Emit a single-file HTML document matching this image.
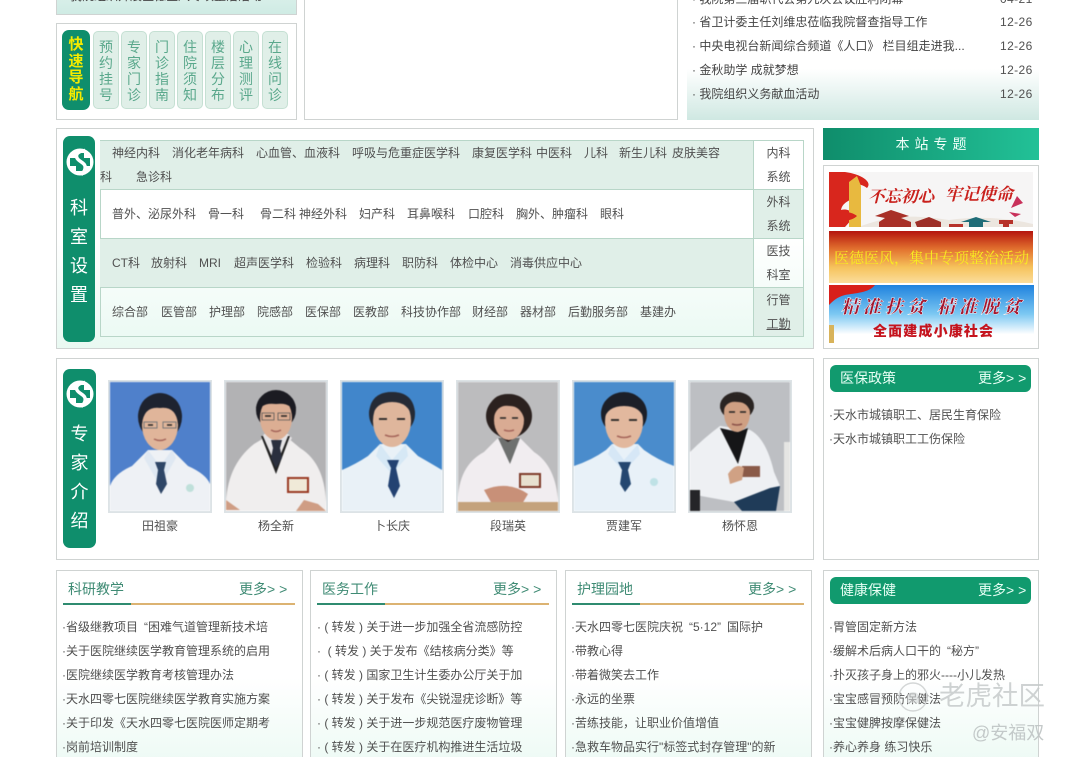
<!DOCTYPE html>
<html lang="zh-CN">
<head>
<meta charset="utf-8">
<title>医院首页</title>
<style>
*{box-sizing:border-box;margin:0;padding:0}
html,body{width:1066px;height:757px;overflow:hidden;background:#fff}
body{position:relative;font-family:"Liberation Sans","Noto Sans CJK SC",sans-serif;font-size:12px;color:#555}
.a{position:absolute;white-space:nowrap}
.t{position:absolute;white-space:nowrap;line-height:24px;height:24px;font-size:12px;color:#505050}
.box{position:absolute;border:1px solid #cfd3d2;background:#fff}
.mint{background:linear-gradient(#fff 50%,#e9f9f2 100%)}
.qn{position:absolute;top:31px;height:78px;width:26px;background:#e0efe8;border:1px solid #c5e0d3;border-radius:5px;color:#5aa88c;font-size:14px;line-height:16px;text-align:center;padding-top:7px;white-space:normal}
.pill{position:absolute;background:#0f8e6c;border-radius:7px;color:#fff;text-align:center}
.row{position:absolute;left:100px;width:654px;border-bottom:1px solid #b8d6c8}
.sys{position:absolute;left:753px;width:50px;height:49px;border-left:1px solid #b8d6c8;border-bottom:1px solid #b8d6c8;text-align:center;line-height:24px;font-size:12px;color:#505050}
.ph{position:absolute;top:380px;width:104px;height:133px;border:2px solid #dde3e6}
.ph svg{display:block;width:100px;height:129px;filter:blur(.5px)}
.nm{position:absolute;top:514px;width:104px;text-align:center;line-height:24px;font-size:12px;color:#505050}
.g{background:#e0efe8}
.tit{position:absolute;top:577px;font-size:14px;line-height:24px;color:#3f8b74;white-space:nowrap}
.more{position:absolute;top:577px;font-size:14px;line-height:24px;color:#3f8b74;white-space:nowrap}
.bar{position:absolute;top:603px;height:2px;width:232px;background:linear-gradient(90deg,#2f8b70 0,#2f8b70 68px,#dcb372 68px,#dcb372 100%)}
.hd{position:absolute;width:201px;height:27px;background:#119a6e;border-radius:6px;color:#e8fff5;font-size:14px;line-height:27px}
.hd b{font-weight:400;position:absolute;left:10px}
.hd i{font-style:normal;position:absolute;left:148px;white-space:nowrap}
.q{margin-left:6px}
</style>
</head>
<body>

<!-- top row -->
<div class="box" style="left:56px;top:-20px;width:241px;height:35px;background:linear-gradient(#e2f4ef,#cfebe4)"></div>
<div class="t" style="left:70px;top:-16px;color:#444">我院组织开展医德医风专项整治活动</div>

<div class="box" style="left:56px;top:23px;width:241px;height:97px"></div>
<div class="pill" style="left:62px;top:30px;width:28px;height:80px;color:#f5ea00;font-size:15px;font-weight:700;line-height:16.5px;padding-top:7px;white-space:normal">快速导航</div>
<div class="qn" style="left:93px">预约挂号</div>
<div class="qn" style="left:121px">专家门诊</div>
<div class="qn" style="left:149px">门诊指南</div>
<div class="qn" style="left:177px">住院须知</div>
<div class="qn" style="left:205px">楼层分布</div>
<div class="qn" style="left:233px">心理测评</div>
<div class="qn" style="left:262px">在线问诊</div>

<div class="box" style="left:304px;top:-20px;width:374px;height:140px"></div>

<div class="a" style="left:687px;top:60px;width:352px;height:60px;background:linear-gradient(#fff 0,#fff 15%,#cfe8e2 100%)"></div>
<div class="t" style="left:692px;top:-13px;color:#444">· 我院第三届职代会第九次会议胜利闭幕</div>
<div class="t" style="left:1000px;top:-13px;letter-spacing:.4px">04-21</div>
<div class="t" style="left:692px;top:10px;color:#444">· 省卫计委主任刘维忠莅临我院督查指导工作</div>
<div class="t" style="left:1000px;top:10px;letter-spacing:.4px">12-26</div>
<div class="t" style="left:692px;top:34px;color:#444">· 中央电视台新闻综合频道《人口》 栏目组走进我...</div>
<div class="t" style="left:1000px;top:34px;letter-spacing:.4px">12-26</div>
<div class="t" style="left:692px;top:58px;color:#444">· 金秋助学 成就梦想</div>
<div class="t" style="left:1000px;top:58px;letter-spacing:.4px">12-26</div>
<div class="t" style="left:692px;top:82px;color:#444">· 我院组织义务献血活动</div>
<div class="t" style="left:1000px;top:82px;letter-spacing:.4px">12-26</div>

<!-- 科室设置 -->
<div class="box mint" style="left:56px;top:128px;width:758px;height:221px"></div>
<div class="pill" style="left:63px;top:136px;width:32px;height:206px"></div>
<svg class="a" style="left:66px;top:148px" width="28" height="28" viewBox="0 0 28 28"><circle cx="14" cy="14" r="13.5" fill="#fff"/><path d="M10 5H18V10H24V18H18V23H10V18H4V10H10Z" fill="#0f8e6c"/><path d="M19 2.500C13 3 9 6 11 10C13 14 18 14 19 18C20 22 17 25 15 26.500" fill="none" stroke="#fff" stroke-width="3.500"/><path d="M12 3.500C9.500 6 9 9 11 11.500" fill="none" stroke="#fff" stroke-width="1.500"/></svg>
<div class="a" style="left:63px;top:194px;width:32px;text-align:center;color:#fff;font-size:18px;line-height:29px;white-space:normal">科室设置</div>

<div class="a" style="left:100px;top:140px;width:704px;height:197px;border:1px solid #b8d6c8"></div>
<div class="row g" style="top:141px;height:49px"></div>
<div class="row" style="top:190px;height:49px"></div>
<div class="row g" style="top:239px;height:49px"></div>
<div class="row" style="top:288px;height:48px;border-bottom:0"></div>
<div class="sys" style="top:141px">内科<br>系统</div>
<div class="sys g" style="top:190px">外科<br>系统</div>
<div class="sys" style="top:239px">医技<br>科室</div>
<div class="sys g" style="top:288px;height:48px;border-bottom:0">行管<br><span style="text-decoration:underline">工勤</span></div>

<div class="t" style="top:141px;left:112px">神经内科</div>
<div class="t" style="top:141px;left:172px">消化老年病科</div>
<div class="t" style="top:141px;left:256px">心血管、血液科</div>
<div class="t" style="top:141px;left:352px">呼吸与危重症医学科</div>
<div class="t" style="top:141px;left:472px">康复医学科</div>
<div class="t" style="top:141px;left:536px">中医科</div>
<div class="t" style="top:141px;left:584px">儿科</div>
<div class="t" style="top:141px;left:619px">新生儿科</div>
<div class="t" style="top:141px;left:672px">皮肤美容</div>
<div class="t" style="top:165px;left:100px">科</div>
<div class="t" style="top:165px;left:136px">急诊科</div>

<div class="t" style="top:202px;left:112px">普外、泌尿外科</div>
<div class="t" style="top:202px;left:208px">骨一科</div>
<div class="t" style="top:202px;left:260px">骨二科</div>
<div class="t" style="top:202px;left:299px">神经外科</div>
<div class="t" style="top:202px;left:359px">妇产科</div>
<div class="t" style="top:202px;left:407px">耳鼻喉科</div>
<div class="t" style="top:202px;left:468px">口腔科</div>
<div class="t" style="top:202px;left:516px">胸外、肿瘤科</div>
<div class="t" style="top:202px;left:600px">眼科</div>

<div class="t" style="top:251px;left:112px">CT科</div>
<div class="t" style="top:251px;left:151px">放射科</div>
<div class="t" style="top:251px;left:199px">MRI</div>
<div class="t" style="top:251px;left:234px">超声医学科</div>
<div class="t" style="top:251px;left:306px">检验科</div>
<div class="t" style="top:251px;left:354px">病理科</div>
<div class="t" style="top:251px;left:402px">职防科</div>
<div class="t" style="top:251px;left:450px">体检中心</div>
<div class="t" style="top:251px;left:510px">消毒供应中心</div>

<div class="t" style="top:300px;left:112px">综合部</div>
<div class="t" style="top:300px;left:161px">医管部</div>
<div class="t" style="top:300px;left:209px">护理部</div>
<div class="t" style="top:300px;left:257px">院感部</div>
<div class="t" style="top:300px;left:305px">医保部</div>
<div class="t" style="top:300px;left:353px">医教部</div>
<div class="t" style="top:300px;left:401px">科技协作部</div>
<div class="t" style="top:300px;left:472px">财经部</div>
<div class="t" style="top:300px;left:520px">器材部</div>
<div class="t" style="top:300px;left:568px">后勤服务部</div>
<div class="t" style="top:300px;left:640px">基建办</div>

<!-- 本站专题 -->
<div class="a" style="left:823px;top:128px;width:216px;height:32px;padding-left:5px;background:linear-gradient(90deg,#0f8d6b,#22c197);color:#f0fff9;font-size:14px;line-height:32px;text-align:center;letter-spacing:5px">本站专题</div>
<div class="box" style="left:823px;top:165px;width:216px;height:184px"></div>

<svg class="a" style="left:829px;top:172px" width="204" height="55" viewBox="0 0 204 55">
<rect width="204" height="55" fill="#f6f5f5"/>
<path d="M0 0H16C32 2 44 10 38 16C30 10 24 12 24 22C24 30 14 28 12 38C18 36 26 40 24 46L16 55H0Z" fill="#d8261d"/>
<path d="M20 10L28 4L32 14V55H20Z" fill="#e8b93f"/>
<path d="M0 48C8 38 20 38 28 44C22 50 12 48 2 55H0Z" fill="#d8261d"/>
<path d="M32 54C60 44 80 42 120 48C150 44 180 46 204 52V55H32Z" fill="#ece6df"/>
<path d="M46 44L62 38L80 44L72 46L82 50V55H50V50L56 46Z" fill="#a83028"/>
<path d="M86 50L100 45L112 50V55H88Z" fill="#9d2f28"/>
<path d="M132 50L147 45L162 50H154V55H140V50Z" fill="#1f6d78"/>
<path d="M120 52H134V55H120ZM170 48H184V52H180V55H174V52H170Z" fill="#b7322a"/>
<text x="39" y="30" font-family="Noto Serif CJK SC,Liberation Serif,serif" font-size="16.500" font-weight="700" fill="#c9201c" font-style="italic">不忘初心</text>
<text x="116" y="28" font-family="Noto Serif CJK SC,Liberation Serif,serif" font-size="17" font-weight="700" fill="#c9201c" font-style="italic">牢记使命</text>
<path d="M188 24L182 36L194 31ZM180 40L192 42L186 45Z" fill="#c8305a"/>
</svg>
<svg class="a" style="left:829px;top:231px" width="204" height="52" viewBox="0 0 204 52">
<defs><linearGradient id="b2" x1="0" x2="0" y1="0" y2="1"><stop offset="0" stop-color="#b5140e"/><stop offset=".35" stop-color="#e2722f"/><stop offset=".7" stop-color="#f6c35c"/><stop offset="1" stop-color="#fbdd9c"/></linearGradient></defs>
<rect width="204" height="52" fill="url(#b2)"/>
<text x="5" y="32" font-family="Noto Serif CJK SC,Liberation Serif,serif" font-size="15" fill="#f8ee20">医德医风，集中专项整治活动</text>
</svg>
<svg class="a" style="left:829px;top:285px" width="205" height="58" viewBox="0 0 205 58">
<defs><linearGradient id="b3" x1="0" x2="0" y1="0" y2="1"><stop offset="0" stop-color="#1f82de"/><stop offset=".5" stop-color="#7cc8f2"/><stop offset=".85" stop-color="#fff"/><stop offset="1" stop-color="#fff"/></linearGradient></defs>
<rect width="205" height="58" fill="url(#b3)"/>
<path d="M0 0H46C40 8 26 8 16 10C8 12 4 16 0 20Z" fill="#d81f1a"/>
<rect x="0" y="40" width="5" height="18" fill="#d8b35a"/>
<text x="12" y="28" font-family="Noto Serif CJK SC,Liberation Serif,serif" font-size="18" font-weight="900" fill="#a3172f" stroke="#fff" stroke-width=".4" font-style="italic" textLength="84">精准扶贫</text>
<text x="108" y="28" font-family="Noto Serif CJK SC,Liberation Serif,serif" font-size="18" font-weight="900" fill="#a3172f" stroke="#fff" stroke-width=".4" font-style="italic" textLength="84">精准脱贫</text>
<text x="44" y="51" font-family="Liberation Sans,Noto Sans CJK SC,sans-serif" font-size="14" font-weight="900" fill="#c5141e" textLength="120">全面建成小康社会</text>
</svg>

<!-- 专家介绍 -->
<div class="box" style="left:56px;top:358px;width:758px;height:202px"></div>
<div class="pill" style="left:63px;top:369px;width:33px;height:179px"></div>
<svg class="a" style="left:66px;top:380px" width="28" height="28" viewBox="0 0 28 28"><circle cx="14" cy="14" r="13.5" fill="#fff"/><path d="M10 5H18V10H24V18H18V23H10V18H4V10H10Z" fill="#0f8e6c"/><path d="M19 2.500C13 3 9 6 11 10C13 14 18 14 19 18C20 22 17 25 15 26.500" fill="none" stroke="#fff" stroke-width="3.500"/><path d="M12 3.500C9.500 6 9 9 11 11.500" fill="none" stroke="#fff" stroke-width="1.500"/></svg>
<div class="a" style="left:63px;top:420px;width:33px;text-align:center;color:#fff;font-size:18px;line-height:29px;white-space:normal">专家介绍</div>

<div class="ph" style="left:108px"><svg viewBox="0 0 100 129"><rect width="100" height="129" fill="#4f80cb"/><path d="M0 104Q4 92 22 84L38 68H62L78 84Q96 92 100 102V129H0Z" fill="#eef1f5"/><path d="M38 68L50 84L62 68L66 76L50 104L34 76Z" fill="#dfe8f2"/><path d="M45 80H56L54 88L57 102L51 112L46 102L48 88Z" fill="#2e4667"/><ellipse cx="50" cy="35" rx="22" ry="24" fill="#1e2330"/><ellipse cx="50" cy="43" rx="18" ry="25" fill="#e0b59a"/><path d="M32 42Q34 24 50 26Q66 24 68 42L72 34Q70 12 50 12Q30 12 28 34Z" fill="#1e2330"/><path d="M34 40H47V46H34ZM53 40H66V46H53Z" fill="none" stroke="#777" stroke-width="1"/><path d="M38 43H43M57 43H62" stroke="#222" stroke-width="1.500"/><path d="M44 57Q50 60 56 57" stroke="#a5655a" stroke-width="1.500" fill="none"/><circle cx="80" cy="106" r="4" fill="#bfe0da"/></svg></div>
<div class="nm" style="left:108px">田祖豪</div>

<div class="ph" style="left:224px"><svg viewBox="0 0 100 129"><rect width="100" height="129" fill="#b2b2b4"/><path d="M0 125Q0 84 28 62L38 56H62L74 66Q100 82 100 125V129H0Z" fill="#f0eeee"/><path d="M36 56L50 84L66 56L62 52H38Z" fill="#e6e4e6"/><path d="M35 54L50 92L64 54L62 54L50 84L37 54Z" fill="#222"/><path d="M45 58H56L54 66L56 76L50 86L45 76L47 66Z" fill="#2a2f3e"/><rect x="62" y="96" width="20" height="14" fill="#f0ead8" stroke="#9a3a24" stroke-width="2"/><ellipse cx="50" cy="28" rx="20" ry="20" fill="#1b1b22"/><ellipse cx="50" cy="36" rx="16" ry="22" fill="#dcae93"/><path d="M32 32Q34 20 50 22Q66 20 68 32L70 26Q68 10 50 10Q32 10 30 26Z" fill="#1b1b22"/><path d="M36 31H48V38H36ZM52 31H64V38H52Z" fill="none" stroke="#555" stroke-width=".8"/><path d="M39 34H45M55 34H61" stroke="#222" stroke-width="1.500"/><path d="M45 48Q50 51 55 48" stroke="#a5655a" stroke-width="1.500" fill="none"/><path d="M0 118L14 128H0ZM78 118L92 122L100 129H70Z" fill="#cf9d84"/></svg></div>
<div class="nm" style="left:224px">杨全新</div>

<div class="ph" style="left:340px"><svg viewBox="0 0 100 129"><rect width="100" height="129" fill="#4186cb"/><path d="M0 88Q14 82 26 74L38 62H64L76 74Q90 82 100 88V129H0Z" fill="#e9f1f7"/><path d="M38 62L50 78L64 62L66 74L50 92L34 74Z" fill="#d6e8f5"/><path d="M45 78H57L54 86L58 104L52 116L46 104L49 86Z" fill="#234272"/><ellipse cx="50" cy="32" rx="23" ry="22" fill="#252a35"/><ellipse cx="50" cy="39" rx="19" ry="26" fill="#dfb69c"/><path d="M30 36Q33 20 50 20Q67 20 70 36L73 32Q72 10 50 10Q28 10 27 32Z" fill="#252a35"/><path d="M37 37H45M55 37H63" stroke="#222" stroke-width="1.800"/><path d="M43 53Q50 56 57 53" stroke="#a5655a" stroke-width="1.500" fill="none"/></svg></div>
<div class="nm" style="left:340px">卜长庆</div>

<div class="ph" style="left:456px"><svg viewBox="0 0 100 129"><rect width="100" height="129" fill="#bcbcbe"/><path d="M0 120Q0 84 26 70L40 56H62L76 70Q98 84 100 120H0Z" fill="#f1edf0"/><path d="M40 56H62L52 82Z" fill="#6e706f"/><path d="M38 52L50 60L64 52L62 48H40Z" fill="#2a1d1c"/><ellipse cx="51" cy="34" rx="23" ry="22" fill="#2b211f"/><ellipse cx="51" cy="38" rx="15" ry="20" fill="#d9ab93"/><path d="M36 34Q40 22 52 24Q62 24 66 36L72 28Q66 12 50 12Q34 12 30 28Z" fill="#2b211f"/><path d="M42 36H48M54 36H60" stroke="#222" stroke-width="1.500"/><path d="M46 48Q51 50 56 48" stroke="#a5655a" stroke-width="1.500" fill="none"/><rect x="62" y="92" width="20" height="13" fill="#e7e0cf" stroke="#7e3a2a" stroke-width="2"/><path d="M26 108Q50 98 70 112L64 122H34Z" fill="#c89078"/><rect y="120" width="100" height="9" fill="#c4a27c"/></svg></div>
<div class="nm" style="left:456px">段瑞英</div>

<div class="ph" style="left:572px"><svg viewBox="0 0 100 129"><rect width="100" height="129" fill="#4a8ccc"/><path d="M0 84Q18 78 32 68L38 62H64L70 68Q84 78 100 84V129H0Z" fill="#e8f1f8"/><path d="M38 62L50 78L64 62L66 72L50 90L34 72Z" fill="#d6e7f6"/><path d="M44 80H57L54 88L57 102L51 110L46 102L48 88Z" fill="#254770"/><ellipse cx="50" cy="32" rx="23" ry="22" fill="#1c1f28"/><ellipse cx="50" cy="40" rx="19" ry="26" fill="#e2b89e"/><path d="M30 38Q33 24 50 24Q67 24 70 38L73 32Q72 12 50 12Q28 12 27 32Z" fill="#1c1f28"/><path d="M37 38H45M55 38H63" stroke="#222" stroke-width="1.800"/><path d="M43 54Q50 57 57 54" stroke="#a5655a" stroke-width="1.500" fill="none"/><circle cx="80" cy="100" r="4" fill="#bfe2e6"/></svg></div>
<div class="nm" style="left:572px">贾建军</div>

<div class="ph" style="left:688px"><svg viewBox="0 0 100 129"><rect width="100" height="129" fill="#bdbfc3"/><path d="M0 70Q14 56 30 44L60 48Q76 56 84 90L90 104L44 120L0 112Z" fill="#eef0f3"/><path d="M30 46L48 82L58 46L48 50Z" fill="#151517"/><ellipse cx="47" cy="24" rx="17" ry="14" fill="#2a2422"/><ellipse cx="47" cy="31" rx="13" ry="19" fill="#cfa083"/><path d="M33 30Q36 18 48 20Q58 20 61 32L64 26Q62 12 47 12Q32 12 30 26Z" fill="#2a2422"/><path d="M39 30H45M50 30H56" stroke="#222" stroke-width="1.500"/><path d="M42 42Q47 44 52 42" stroke="#8a5048" stroke-width="1.500" fill="none"/><rect x="52" y="84" width="18" height="11" fill="#8a5a48"/><path d="M38 92Q46 80 54 86L52 98L40 102Z" fill="#d0a184"/><path d="M44 120L80 106L90 104L86 129H52Z" fill="#1f3b58"/><rect y="108" width="10" height="21" fill="#252528"/><rect x="94" y="60" width="6" height="69" fill="#e5e5e3"/></svg></div>
<div class="nm" style="left:688px">杨怀恩</div>

<div class="box" style="left:823px;top:358px;width:216px;height:202px"></div>
<div class="hd" style="left:830px;top:365px"><b>医保政策</b><i>更多&gt; &gt;</i></div>
<div class="t" style="left:829px;top:403px">·天水市城镇职工、居民生育保险</div>
<div class="t" style="left:829px;top:427px">·天水市城镇职工工伤保险</div>

<!-- 底部 -->
<div class="box mint" style="left:56px;top:570px;width:247px;height:215px"></div>
<div class="tit" style="left:68px">科研教学</div>
<div class="more" style="left:239px">更多&gt; &gt;</div>
<div class="bar" style="left:63px"></div>
<div class="t" style="left:62px;top:615px">·省级继教项目<span class="q">“</span>困难气道管理新技术培</div>
<div class="t" style="left:62px;top:639px">·关于医院继续医学教育管理系统的启用</div>
<div class="t" style="left:62px;top:663px">·医院继续医学教育考核管理办法</div>
<div class="t" style="left:62px;top:687px">·天水四零七医院继续医学教育实施方案</div>
<div class="t" style="left:62px;top:711px">·关于印发《天水四零七医院医师定期考</div>
<div class="t" style="left:62px;top:735px">·岗前培训制度</div>

<div class="box mint" style="left:310px;top:570px;width:247px;height:215px"></div>
<div class="tit" style="left:322px">医务工作</div>
<div class="more" style="left:493px">更多&gt; &gt;</div>
<div class="bar" style="left:317px"></div>
<div class="t" style="left:317px;top:615px">· ( 转发 ) 关于进一步加强全省流感防控</div>
<div class="t" style="left:317px;top:639px">·&nbsp; ( 转发 ) 关于发布《结核病分类》等</div>
<div class="t" style="left:317px;top:663px">· ( 转发 ) 国家卫生计生委办公厅关于加</div>
<div class="t" style="left:317px;top:687px">· ( 转发 ) 关于发布《尖锐湿疣诊断》等</div>
<div class="t" style="left:317px;top:711px">· ( 转发 ) 关于进一步规范医疗废物管理</div>
<div class="t" style="left:317px;top:735px">· ( 转发 ) 关于在医疗机构推进生活垃圾</div>

<div class="box mint" style="left:565px;top:570px;width:247px;height:215px"></div>
<div class="tit" style="left:577px">护理园地</div>
<div class="more" style="left:748px">更多&gt; &gt;</div>
<div class="bar" style="left:572px"></div>
<div class="t" style="left:571px;top:615px">·天水四零七医院庆祝<span class="q">“</span>5·12”<span class="q">国</span>际护</div>
<div class="t" style="left:571px;top:639px">·带教心得</div>
<div class="t" style="left:571px;top:663px">·带着微笑去工作</div>
<div class="t" style="left:571px;top:687px">·永远的坐票</div>
<div class="t" style="left:571px;top:711px">·苦练技能，让职业价值增值</div>
<div class="t" style="left:571px;top:735px">·急救车物品实行"标签式封存管理"的新</div>

<div class="box mint" style="left:823px;top:570px;width:216px;height:215px"></div>
<div class="hd" style="left:830px;top:577px"><b>健康保健</b><i>更多&gt; &gt;</i></div>
<div class="t" style="left:829px;top:615px">·胃管固定新方法</div>
<div class="t" style="left:829px;top:639px">·缓解术后病人口干的<span class="q">“</span>秘方”</div>
<div class="t" style="left:829px;top:663px">·扑灭孩子身上的邪火----小儿发热</div>
<div class="t" style="left:829px;top:687px">·宝宝感冒预防保健法</div>
<div class="t" style="left:829px;top:711px">·宝宝健脾按摩保健法</div>
<div class="t" style="left:829px;top:735px">·养心养身 练习快乐</div>

<!-- 水印 -->
<svg class="a" style="left:897px;top:681px" width="32" height="32" viewBox="0 0 32 32"><circle cx="16" cy="16" r="14" fill="none" stroke="#d4d7d7" stroke-width="1.500"/><path d="M10 14Q16 8 22 14V22H10Z" fill="#d5d8d8" opacity=".6"/></svg>
<div class="a" style="left:939px;top:678px;font-size:26.500px;line-height:36px;color:rgba(198,202,202,.85)">老虎社区</div>
<div class="a" style="left:972px;top:721px;font-size:18px;line-height:24px;color:rgba(190,195,195,.9)">@安福双</div>

</body>
</html>
